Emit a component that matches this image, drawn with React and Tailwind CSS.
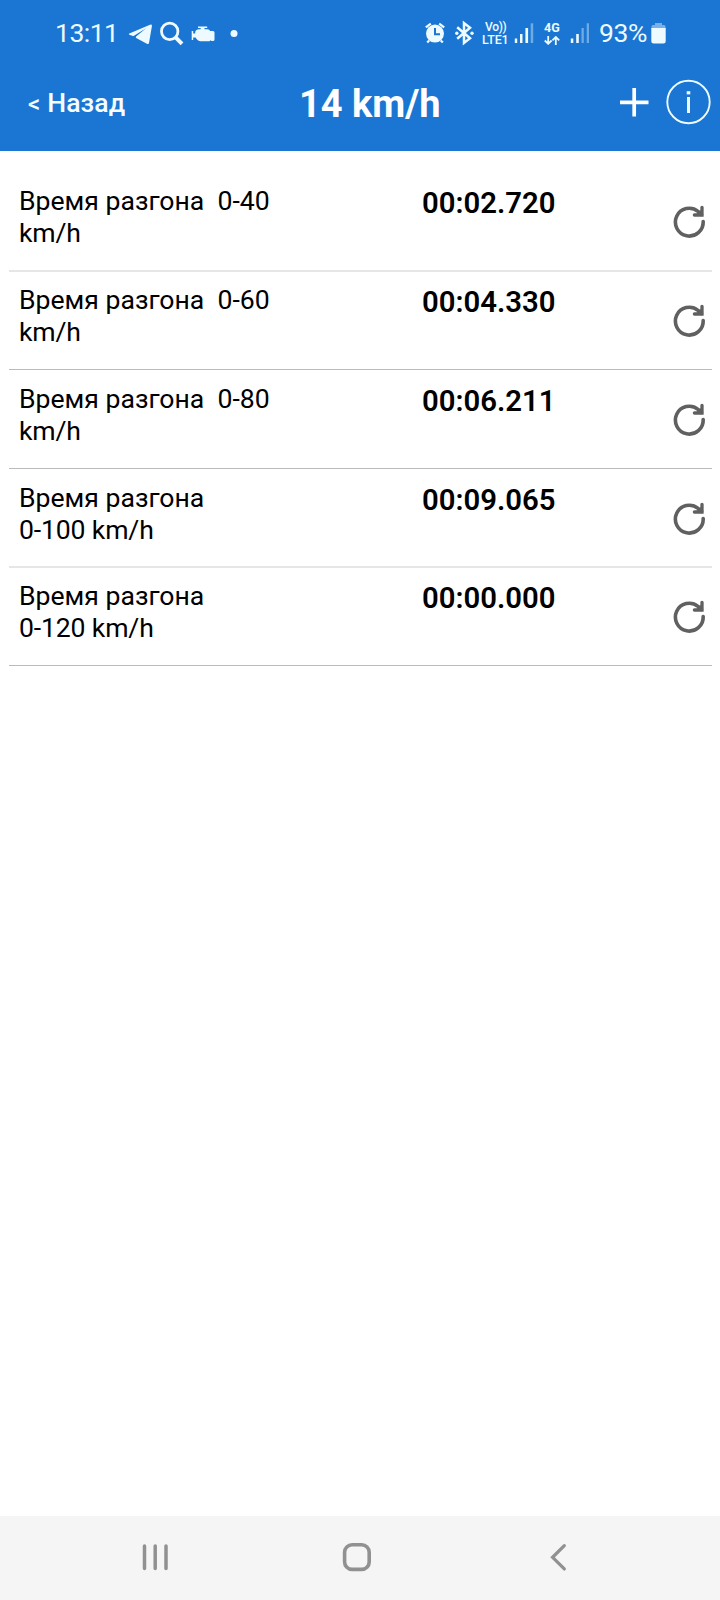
const runs = [
  { lines: ["Время разгона\u00a0 0-40", "km/h"], time: "00:02.720", strong: false, height: "h-[99px]" },
  { lines: ["Время разгона\u00a0 0-60", "km/h"], time: "00:04.330", strong: true, height: "h-[99px]" },
  { lines: ["Время разгона\u00a0 0-80", "km/h"], time: "00:06.211", strong: true, height: "h-[99px]" },
  { lines: ["Время разгона", "0-100 km/h"], time: "00:09.065", strong: false, height: "h-[98px]" },
  { lines: ["Время разгона", "0-120 km/h"], time: "00:00.000", strong: true, height: "h-[99px]" },
];

function StatusBar() {
  return (
    <div className="flex h-[68px] items-start text-[#edfaff]">
      <div className="ml-[55px] mt-[17px] w-[72px] whitespace-nowrap text-[26.5px] leading-[32px] tracking-[-0.5px]">13:11</div>
      <svg className="mt-[10px] h-[50px] w-[113px] shrink-0" viewBox="127 10 113 50" fill="currentColor">
        <path d="M129.3 33.6 L150 24.7 Q152.4 23.8 151.9 26.2 L149 43 Q148.6 44.8 146.9 43.7 L136.2 38 Q135.3 37.4 136.1 36.6 L146 28.3 L134 35.7 Q133.2 36.2 132.3 35.8 L129.3 34.8 Q128.3 34.1 129.3 33.6Z" />
        <circle cx="169.7" cy="31.4" r="8.2" fill="none" stroke="currentColor" strokeWidth="2.8" />
        <path d="M175.4 37.2 L182 43.8" stroke="currentColor" strokeWidth="4" />
        <path d="M198 26.5H207.2V28H204.5V29.2H207.500Q209.500 29.200 210.200 31H213Q214.500 31 214.500 32.500V39.500Q214.500 41 213 41H211.500L210.500 40.200L209.500 41.300H200.500Q198.500 41.300 197 39.500L195.500 37.500H193.200V40H191.700V31H193.200V33.500H195.200V32Q196 29.200 199 29.200H200.700V28H198Z" />
        <circle cx="234" cy="33.5" r="3.5" />
      </svg>
      <svg className="ml-[182px] mt-[10px] h-[50px] w-[56px] shrink-0" viewBox="422 10 56 50" fill="none" stroke="currentColor">
        <circle cx="435" cy="33.6" r="9" fill="currentColor" stroke="none" />
        <path d="M425.8 27.3l5-3.6M444.2 27.3l-5-3.6M429.2 40.4l-2 2.2M440.8 40.4l2 2.2" strokeWidth="2.2" />
        <path d="M435 28v6.2h5" stroke="#1a76d2" strokeWidth="2" />
        <path d="M457.2 27.3l12.8 11-6 4.7v-20l6 4.7-12.8 11" strokeWidth="2.5" />
        <circle cx="456.8" cy="33.2" r="1.7" fill="currentColor" stroke="none" />
        <circle cx="472" cy="33.2" r="1.7" fill="currentColor" stroke="none" />
      </svg>
      <div className="ml-[4px] mt-[22px] flex h-[24px] w-[31px] flex-col whitespace-nowrap font-medium">
        <span className="pl-[3px] text-[12px] leading-[11px] tracking-[-0.3px]">Vo))</span>
        <span className="text-[12.5px] leading-[13px] tracking-[-0.1px]">LTE1</span>
      </div>
      <svg className="mt-[10px] h-[50px] w-[24px] shrink-0" viewBox="513 10 24 50" fill="currentColor">
        <path d="M514.800 38.500h2.400v4.500h-2.400zM520 34h2.500v9H520zM525.400 28h2.700v15h-2.700z" />
        <path d="M530.700 23.300h2.500V43h-2.500z" opacity=".4" />
      </svg>
      <div className="ml-[7px] mt-[21px] w-[20px] text-[12.5px] font-bold leading-[14px]">
        4G
        <svg className="mt-px h-[9px] w-[16px]" viewBox="0 0 16 9" fill="none" stroke="currentColor" strokeWidth="1.8">
          <path d="M4.2 0v7.6M.8 4.5l3.4 3.3 3.4-3.3M11.8 9V1.2M8.4 4.300l3.400-3.300 3.400 3.300" />
        </svg>
      </div>
      <svg className="ml-[4px] mt-[10px] h-[50px] w-[26px] shrink-0" viewBox="568 10 26 50" fill="currentColor">
        <path d="M570.800 38.500h2.500v4.500h-2.500zM576.200 34h2.600v9h-2.600z" />
        <path d="M581.500 28h2.300v15h-2.300zM586.700 23.300h2.300V43h-2.300z" opacity=".4" />
      </svg>
      <div className="ml-[5px] mt-[17px] w-[51px] whitespace-nowrap text-[26.5px] leading-[32px] tracking-[-0.4px]">93%</div>
      <svg className="mt-[10px] h-[50px] w-[20px] shrink-0" viewBox="650 10 20 50" fill="currentColor">
        <path d="M655 23h7v2h2q1.5 0 1.5 1.5V29h-14v-2.500q0-1.500 1.500-1.500h2z" opacity=".45" />
        <path d="M651.300 28h14.400v13q0 2.500-2.500 2.500h-9.400q-2.500 0-2.500-2.500z" />
      </svg>
    </div>
  );
}

function Header() {
  return (
    <div className="flex h-[83px] items-start text-white">
      <button className="ml-[28px] mt-[18px] w-[271px] whitespace-nowrap text-left text-[26.6px] font-medium leading-[34px] text-[#f4fdff]">
        <span className="mr-[7px] text-[24px]">&lt;</span>
        <span className="tracking-[0.1px]">Назад</span>
      </button>
      <h1 className="mt-[14px] w-[318px] whitespace-nowrap text-[38px] font-bold leading-[44px]">14 km/h</h1>
      <svg className="mt-[2px] h-[66px] w-[103px] shrink-0" viewBox="617 70 103 66" fill="none" stroke="#edfaff">
        <path d="M620 102.300h28.500M634.200 88v28.500" stroke="#fff" strokeWidth="3.700" />
        <circle cx="688.500" cy="102" r="21.200" strokeWidth="1.900" />
        <path d="M688.500 97v16" strokeWidth="3" />
        <path d="M686.700 91.200h3.600v3.200h-3.600z" fill="#edfaff" stroke="none" />
      </svg>
    </div>
  );
}

function RefreshIcon() {
  return (
    <svg className="h-[36px] w-[36px] shrink-0" viewBox="671 204 36 36" fill="none" stroke="#606060" strokeWidth="3.6" strokeLinecap="round">
      <path d="M703.2 221.5a13.9 13.9 0 1 1-5.200-10.200l3.500 3" />
      <path d="M702 207.300v7.700h-7.600" strokeWidth="3.300" />
      <path d="M701.500 210.500v4.500h-5z" fill="#606060" strokeWidth="1.500" />
    </svg>
  );
}

export default function App() {
  return (
    <div className="flex h-[1600px] w-[720px] flex-col overflow-hidden bg-white font-['Roboto',sans-serif] text-black">
      <header className="h-[151px] shrink-0 bg-[#1a76d2]">
        <StatusBar />
        <Header />
      </header>
      <main className="flex-1 pl-[9px] pr-[8px] pt-[21px]">
        {runs.map((run) => (
          <div
            key={run.time}
            className={`flex items-start border-b ${run.height} ${run.strong ? "border-[#bbbbbb]" : "border-[#e6e6e6] shadow-[0_1px_0_#e6e6e6]"}`}
          >
            <div className="ml-[10px] mt-[13px] w-[403px] whitespace-nowrap text-[26.6px] leading-[32px]">
              <div>{run.lines[0]}</div>
              <div className="tracking-[-0.15px]">{run.lines[1]}</div>
            </div>
            <div className="mt-[14px] w-[249px] whitespace-nowrap text-[29.300px] font-semibold leading-[35px]">{run.time}</div>
            <div className="mt-[32px]">
              <RefreshIcon />
            </div>
          </div>
        ))}
      </main>
      <nav className="flex h-[84px] shrink-0 items-start bg-[#f5f5f5] pt-[23px]">
        <svg className="ml-[137px] h-[36px] w-[36px]" viewBox="137 1539 36 36" fill="none" stroke="#919191" strokeWidth="3.500" strokeLinecap="round">
          <path d="M144.500 1546v22.500M155.200 1546v22.500M166 1546v22.500" />
        </svg>
        <svg className="ml-[166px] h-[36px] w-[36px]" viewBox="339 1539 36 36" fill="none" stroke="#919191" strokeWidth="3.600">
          <rect x="344.600" y="1544.800" width="24.600" height="24.600" rx="7.500" />
        </svg>
        <svg className="ml-[166px] h-[36px] w-[36px]" viewBox="541 1539 36 36" fill="none" stroke="#919191" strokeWidth="3.300" strokeLinecap="round">
          <path d="M564.300 1545.700l-11.700 11.600 11.700 11.600" />
        </svg>
      </nav>
    </div>
  );
}
